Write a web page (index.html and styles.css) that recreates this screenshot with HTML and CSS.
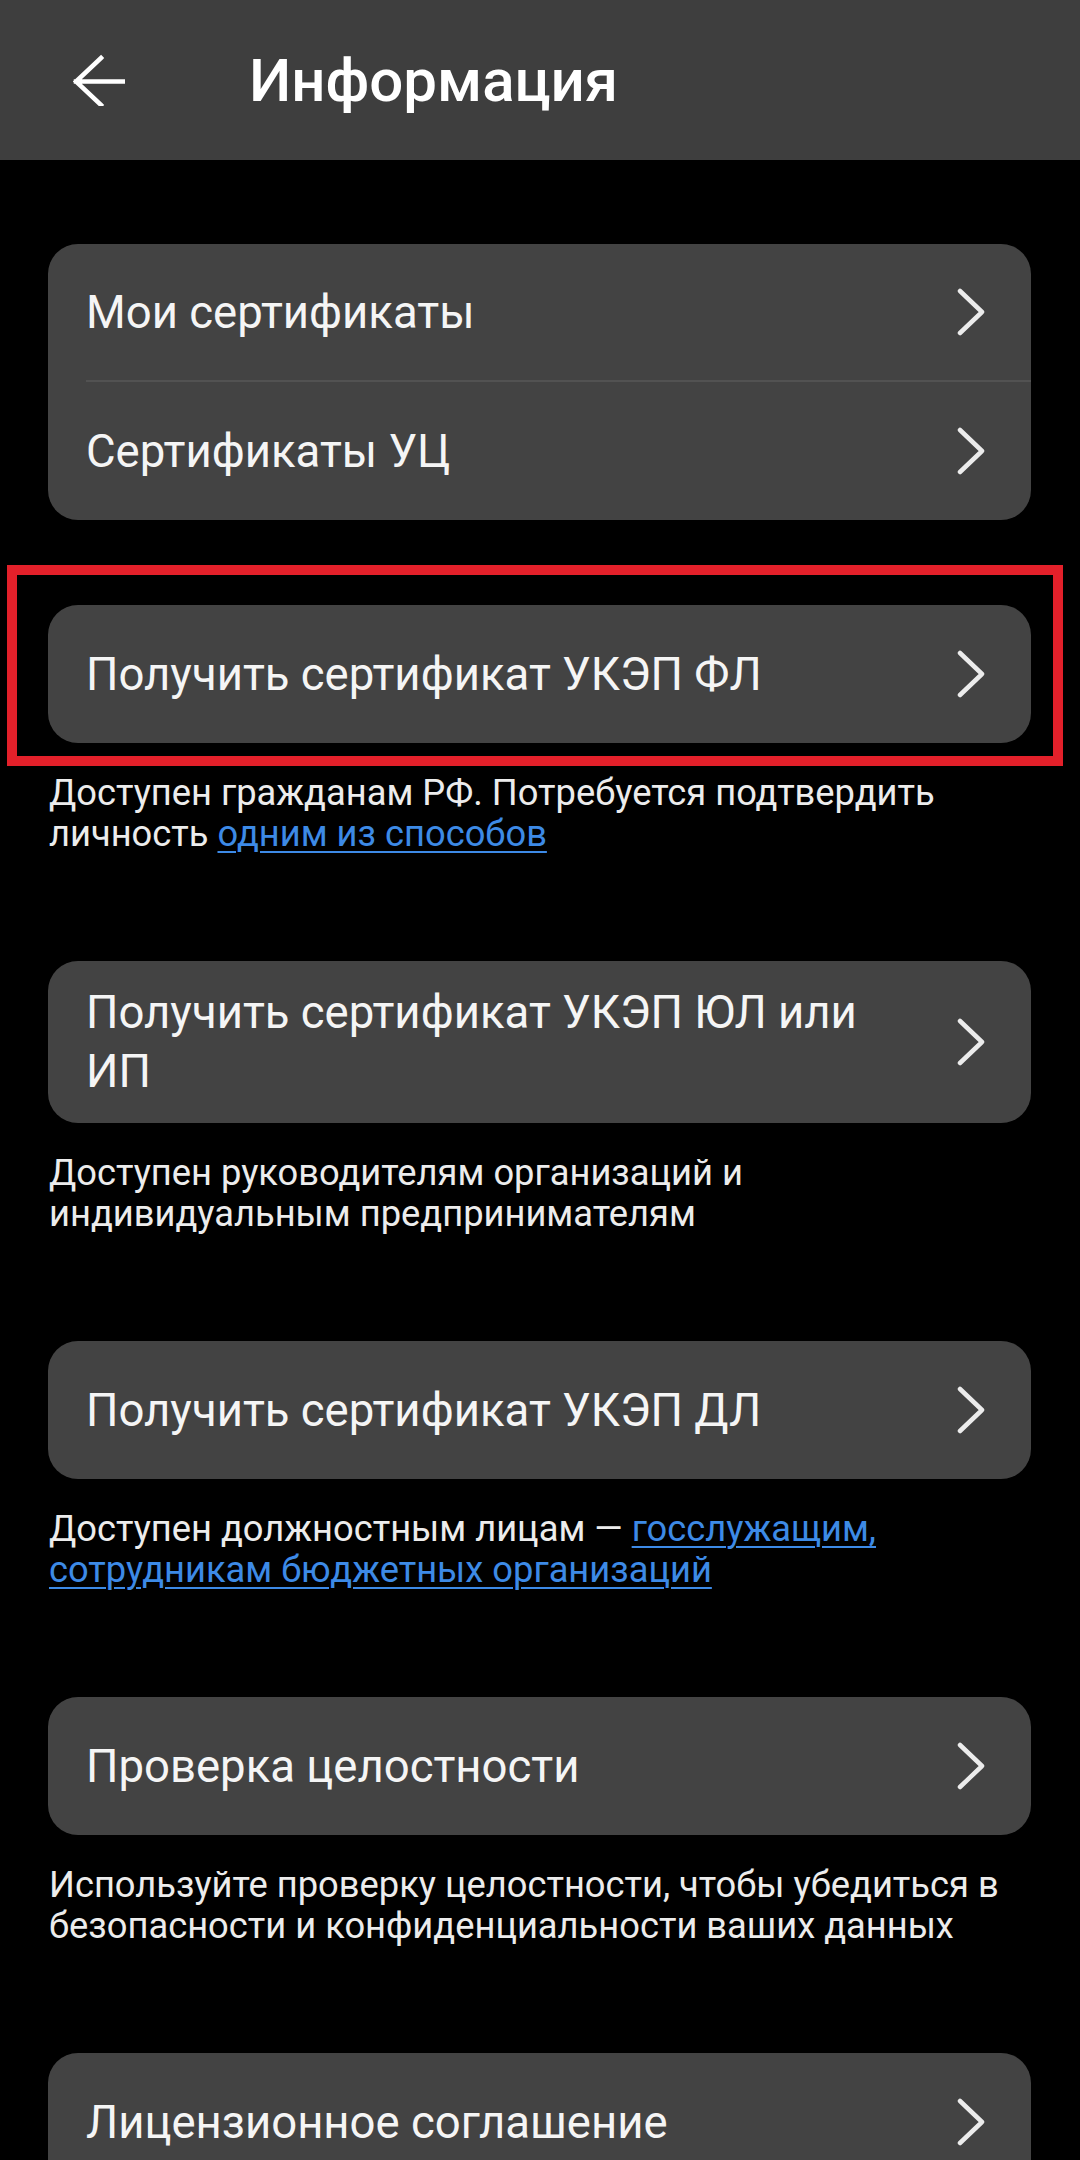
FILE: index.html
```html
<!DOCTYPE html>
<html lang="ru">
<head>
<meta charset="utf-8">
<title>Информация</title>
<link rel="stylesheet" href="styles.css">
</head>
<body>
<header class="topbar">
  <button class="back" aria-label="Назад">
    <svg width="52" height="52" viewBox="0 0 52 52"><path d="M28 4 L3 27.5 L28 51 M3 27.5 H50" fill="none" stroke="#fff" stroke-width="4.5" stroke-linecap="square" stroke-linejoin="miter"/></svg>
  </button>
  <h1 class="title">Информация</h1>
</header>

<main class="content">
  <section class="card">
    <div class="row">
      <span class="row-text">Мои сертификаты</span>
      <svg class="chev" viewBox="0 0 30 48"><path d="M4 3 L26 24 L4 45" /></svg>
    </div>
    <div class="sep"></div>
    <div class="row">
      <span class="row-text">Сертификаты УЦ</span>
      <svg class="chev" viewBox="0 0 30 48"><path d="M4 3 L26 24 L4 45" /></svg>
    </div>
  </section>

  <section class="group first">
    <div class="card highlighted">
      <div class="row">
        <span class="row-text">Получить сертификат УКЭП ФЛ</span>
        <svg class="chev" viewBox="0 0 30 48"><path d="M4 3 L26 24 L4 45" /></svg>
      </div>
      <div class="frame"></div>
    </div>
    <p class="desc">Доступен гражданам РФ. Потребуется подтвердить<br>личность <a href="#">одним из способов</a></p>
  </section>

  <section class="group">
    <div class="card">
      <div class="row">
        <span class="row-text">Получить сертификат УКЭП ЮЛ или<br>ИП</span>
        <svg class="chev" viewBox="0 0 30 48"><path d="M4 3 L26 24 L4 45" /></svg>
      </div>
    </div>
    <p class="desc">Доступен руководителям организаций и<br>индивидуальным предпринимателям</p>
  </section>

  <section class="group">
    <div class="card">
      <div class="row">
        <span class="row-text">Получить сертификат УКЭП ДЛ</span>
        <svg class="chev" viewBox="0 0 30 48"><path d="M4 3 L26 24 L4 45" /></svg>
      </div>
    </div>
    <p class="desc">Доступен должностным лицам — <a href="#">госслужащим,<br>сотрудникам бюджетных организаций</a></p>
  </section>

  <section class="group">
    <div class="card">
      <div class="row">
        <span class="row-text">Проверка целостности</span>
        <svg class="chev" viewBox="0 0 30 48"><path d="M4 3 L26 24 L4 45" /></svg>
      </div>
    </div>
    <p class="desc">Используйте проверку целостности, чтобы убедиться в<br>безопасности и конфиденциальности ваших данных</p>
  </section>

  <section class="group">
    <div class="card">
      <div class="row">
        <span class="row-text">Лицензионное соглашение</span>
        <svg class="chev" viewBox="0 0 30 48"><path d="M4 3 L26 24 L4 45" /></svg>
      </div>
    </div>
  </section>
</main>
</body>
</html>
```

FILE: styles.css
```css
html, body {
  margin: 0;
  padding: 0;
  background: #000;
}

body {
  font-family: Roboto, "Noto Sans", "Liberation Sans", sans-serif;
  color: #f4f4f4;
  width: 1080px;
  height: 2160px;
  overflow: hidden;
}

.topbar {
  height: 160px;
  background: #3e3e3e;
  display: flex;
  align-items: center;
}

.back {
  background: none;
  border: 0;
  padding: 0;
  margin: 0 0 0 73px;
  width: 52px;
  height: 52px;
  display: flex;
}

.title {
  margin: 0 0 0 124px;
  font-size: 60px;
  font-weight: 500;
  color: #fff;
  letter-spacing: 0;
}

.content {
  padding: 84px 49px 0 48px;
  display: flex;
  flex-direction: column;
}

.card {
  background: #434343;
  border-radius: 30px;
  position: relative;
}

.row {
  min-height: 136px;
  box-sizing: border-box;
  padding: 22px 45px 22px 38px;
  display: flex;
  align-items: center;
  justify-content: space-between;
}

.row + .sep + .row {
  min-height: 138px;
}

.row-text {
  font-size: 45.5px;
  line-height: 59px;
  color: #f5f5f5;
}

.sep {
  height: 2px;
  background: #525252;
  margin-left: 38px;
}

.chev {
  width: 30px;
  height: 48px;
  flex: none;
}

.chev path {
  fill: none;
  stroke: #ececec;
  stroke-width: 4.5;
  stroke-linecap: round;
  stroke-linejoin: round;
}

.group {
  margin-top: 107px;
}

.group.first {
  margin-top: 85px;
}

.group .row {
  min-height: 138px;
}

.desc {
  margin: 29px 0 0 1px;
  font-size: 36.3px;
  line-height: 41px;
  color: #ececec;
}

.desc a {
  color: #3d8ae6;
  text-decoration: underline;
  text-decoration-thickness: 2px;
  text-underline-offset: 5px;
}

.frame {
  position: absolute;
  top: -40px;
  left: -41px;
  right: -32px;
  bottom: -23px;
  border: 10px solid #e3202a;
  pointer-events: none;
}
```
